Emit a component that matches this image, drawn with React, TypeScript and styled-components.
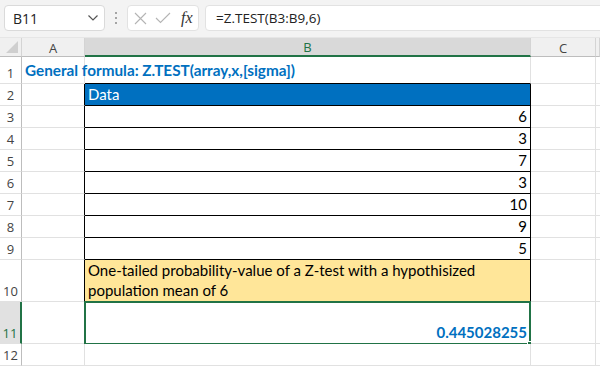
import React from "react";
import styled, { createGlobalStyle } from "styled-components";

const GREEN = "#217346";
const GRID = "#e1e1e1";
const BLUE = "#0070c0";

const Global = createGlobalStyle`
  html, body { margin: 0; padding: 0; background: #fff; }
  body { width: 600px; height: 368px; overflow: hidden; font-family: "Open Sans", "Noto Sans", sans-serif; }
`;

const Page = styled.div`
  width: 600px;
  height: 368px;
  overflow: hidden;
  display: flex;
  flex-direction: column;
  background: #fff;
`;

const Toolbar = styled.div`
  height: 37px;
  flex: 0 0 auto;
  box-sizing: border-box;
  background: #f3f3f3;
  display: flex;
  align-items: center;
  padding: 0 0 1px 4px;
  overflow: hidden;
`;

const NameBox = styled.div`
  flex: 0 0 101px;
  height: 26px;
  box-sizing: border-box;
  background: #fff;
  border: 1px solid #dadada;
  border-radius: 4px;
  display: flex;
  align-items: center;
  justify-content: space-between;
  padding: 0 5px 0 8px;
  font-size: 14px;
  color: #222;
  font-family: "Open Sans", sans-serif;
`;

const Dots = styled.div`
  flex: 0 0 22px;
  display: flex;
  flex-direction: column;
  align-items: center;
  gap: 3px;
  span { width: 2px; height: 2px; background: #8a8a8a; border-radius: 1px; }
`;

const FxBox = styled.div`
  flex: 0 0 72px;
  height: 26px;
  box-sizing: border-box;
  background: #fff;
  border: 1px solid #e2e2e2;
  border-radius: 4px;
  display: flex;
  align-items: center;
  padding: 0 4px 0 6px;
  gap: 8px;
`;

const Fx = styled.span`
  font-family: "Liberation Serif", "DejaVu Serif", serif;
  font-style: italic;
  font-size: 16px;
  color: #333;
  margin-left: 2px;
`;

const FormulaBox = styled.div`
  flex: 0 0 420px;
  margin-left: 6px;
  height: 26px;
  box-sizing: border-box;
  background: #fff;
  border: 1px solid #e2e2e2;
  border-radius: 4px;
  display: flex;
  align-items: center;
  padding-left: 10px;
  font-size: 13.5px;
  color: #222;
  font-family: "Open Sans", sans-serif;
`;

const Row = styled.div<{ $h: number }>`
  display: flex;
  height: ${(p) => p.$h}px;
  flex: 0 0 auto;
`;

const HeaderRow = styled(Row)`
  background: #f0f0f0;
  border-top: 1px solid #e6e6e6;
  box-sizing: border-box;
`;

const COLS = [22, 63, 446, 65];

const ColHead = styled.div<{ $w?: number; $sel?: boolean; $grow?: boolean }>`
  box-sizing: border-box;
  width: ${(p) => (p.$w ? `${p.$w}px` : "auto")};
  flex: ${(p) => (p.$grow ? "1 1 auto" : "0 0 auto")};
  border-right: 1px solid #d4d4d4;
  border-bottom: ${(p) => (p.$sel ? `2px solid ${GREEN}` : "1px solid #bdbdbd")};
  background: ${(p) => (p.$sel ? "#d9d9d9" : "transparent")};
  color: ${(p) => (p.$sel ? GREEN : "#444")};
  font-size: 13px;
  display: flex;
  align-items: center;
  justify-content: center;
  padding-top: 1px;
  font-family: "Open Sans", sans-serif;
`;

const Corner = styled(ColHead)`
  position: relative;
  &::after {
    content: "";
    position: absolute;
    right: 3px;
    bottom: 3px;
    width: 0;
    height: 0;
    border-left: 12px solid transparent;
    border-bottom: 12px solid #cfcfcf;
  }
`;

const RowHead = styled.div<{ $sel?: boolean }>`
  box-sizing: border-box;
  width: ${COLS[0]}px;
  flex: 0 0 auto;
  border-bottom: 1px solid ${GRID};
  border-right: ${(p) => (p.$sel ? `2px solid ${GREEN}` : `1px solid #bdbdbd`)};
  background: ${(p) => (p.$sel ? "#e1e1e1" : "#fff")};
  color: ${(p) => (p.$sel ? GREEN : "#444")};
  font-size: 13px;
  line-height: 17px;
  display: flex;
  align-items: flex-end;
  justify-content: center;
  padding-bottom: 1px;
  font-family: "Open Sans", sans-serif;
`;

const Cell = styled.div<{
  $w?: number;
  $grow?: boolean;
  $right?: string;
  $bottom?: string;
  $bg?: string;
  $align?: "left" | "right";
  $over?: boolean;
}>`
  box-sizing: border-box;
  position: relative;
  width: ${(p) => (p.$w ? `${p.$w}px` : "auto")};
  flex: ${(p) => (p.$grow ? "1 1 auto" : "0 0 auto")};
  border-right: 1px solid ${(p) => p.$right || GRID};
  border-bottom: 1px solid ${(p) => p.$bottom || GRID};
  background: ${(p) => p.$bg || "#fff"};
  display: flex;
  align-items: flex-end;
  justify-content: ${(p) => (p.$align === "right" ? "flex-end" : "flex-start")};
  padding: 0 3px 1px 3px;
  font-family: "Lato", "Open Sans", sans-serif;
  font-size: 15px;
  line-height: 20px;
  color: #000;
  white-space: nowrap;
  z-index: ${(p) => (p.$over ? 2 : "auto")};
`;

const Title = styled.span`
  font-weight: bold;
  color: ${BLUE};
  font-size: 15.3px;
  padding-bottom: 2px;
`;

const HeaderText = styled.span`
  color: #fff;
`;

const Wrap = styled.span`
  white-space: normal;
  line-height: 20px;
`;

const Result = styled.span`
  font-weight: bold;
  color: ${BLUE};
`;

const Selection = styled.div`
  position: absolute;
  left: -1px;
  top: -1px;
  right: -1px;
  bottom: -2px;
  border: 2px solid ${GREEN};
  pointer-events: none;
  &::after {
    content: "";
    position: absolute;
    right: -5px;
    bottom: -5px;
    width: 6px;
    height: 6px;
    background: ${GREEN};
    border-left: 1px solid #fff;
    border-top: 1px solid #fff;
  }
`;

type RowDef = {
  n: number;
  h: number;
  b?: React.ReactNode;
  kind: "plain" | "title" | "head" | "value" | "note" | "result";
};

const rows: RowDef[] = [
  { n: 1, h: 27, kind: "title" },
  { n: 2, h: 22, kind: "head" },
  { n: 3, h: 22, kind: "value", b: "6" },
  { n: 4, h: 22, kind: "value", b: "3" },
  { n: 5, h: 22, kind: "value", b: "7" },
  { n: 6, h: 22, kind: "value", b: "3" },
  { n: 7, h: 22, kind: "value", b: "10" },
  { n: 8, h: 22, kind: "value", b: "9" },
  { n: 9, h: 22, kind: "value", b: "5" },
  { n: 10, h: 42, kind: "note" },
  { n: 11, h: 42, kind: "result" },
  { n: 12, h: 22, kind: "plain" },
];

const Chevron = () => (
  <svg width="12" height="8" viewBox="0 0 12 8">
    <path d="M1.5 1.5 L6 6 L10.5 1.5" fill="none" stroke="#555" strokeWidth="1.2" />
  </svg>
);

const Cross = () => (
  <svg width="13" height="13" viewBox="0 0 13 13">
    <path d="M1 1 L12 12 M12 1 L1 12" stroke="#b4b4b4" strokeWidth="1.1" fill="none" />
  </svg>
);

const Check = () => (
  <svg width="16" height="12" viewBox="0 0 16 12">
    <path d="M1 6 L5.5 10.5 L15 1" stroke="#b4b4b4" strokeWidth="1.1" fill="none" />
  </svg>
);

const SheetRow: React.FC<{ r: RowDef }> = ({ r }) => {
  const inTable = r.n >= 2 && r.n <= 10;
  const black = "#000";
  const sel = r.n === 11;
  let bContent: React.ReactNode = null;
  let bg: string | undefined;
  let align: "left" | "right" = "left";
  if (r.kind === "head") {
    bg = BLUE;
    bContent = <HeaderText>Data</HeaderText>;
  } else if (r.kind === "value") {
    align = "right";
    bContent = r.b;
  } else if (r.kind === "note") {
    bg = "#ffe699";
    bContent = (
      <Wrap>One-tailed probability-value of a Z-test with a hypothisized population mean of 6</Wrap>
    );
  } else if (r.kind === "result") {
    align = "right";
    bContent = <Result>0.445028255</Result>;
  }
  return (
    <Row $h={r.h}>
      <RowHead $sel={sel}>{r.n}</RowHead>
      <Cell $w={COLS[1]} $right={inTable ? black : undefined} $over={r.kind === "title"}>
        {r.kind === "title" && <Title>General formula: Z.TEST(array,x,[sigma])</Title>}
      </Cell>
      <Cell
        $w={COLS[2]}
        $right={inTable ? black : undefined}
        $bottom={inTable || r.n === 1 ? black : undefined}
        $bg={bg}
        $align={align}
      >
        {bContent}
        {sel && <Selection />}
      </Cell>
      <Cell $w={COLS[3]} />
      <Cell $grow />
    </Row>
  );
};

export default function App() {
  return (
    <Page>
      <Global />
      <Toolbar>
        <NameBox>
          <span>B11</span>
          <Chevron />
        </NameBox>
        <Dots>
          <span />
          <span />
          <span />
        </Dots>
        <FxBox>
          <Cross />
          <Check />
          <Fx>fx</Fx>
        </FxBox>
        <FormulaBox>=Z.TEST(B3:B9,6)</FormulaBox>
      </Toolbar>
      <HeaderRow $h={20}>
        <Corner $w={COLS[0]} />
        <ColHead $w={COLS[1]}>A</ColHead>
        <ColHead $w={COLS[2]} $sel>B</ColHead>
        <ColHead $w={COLS[3]}>C</ColHead>
        <ColHead $grow />
      </HeaderRow>
      {rows.map((r) => (
        <SheetRow key={r.n} r={r} />
      ))}
    </Page>
  );
}
